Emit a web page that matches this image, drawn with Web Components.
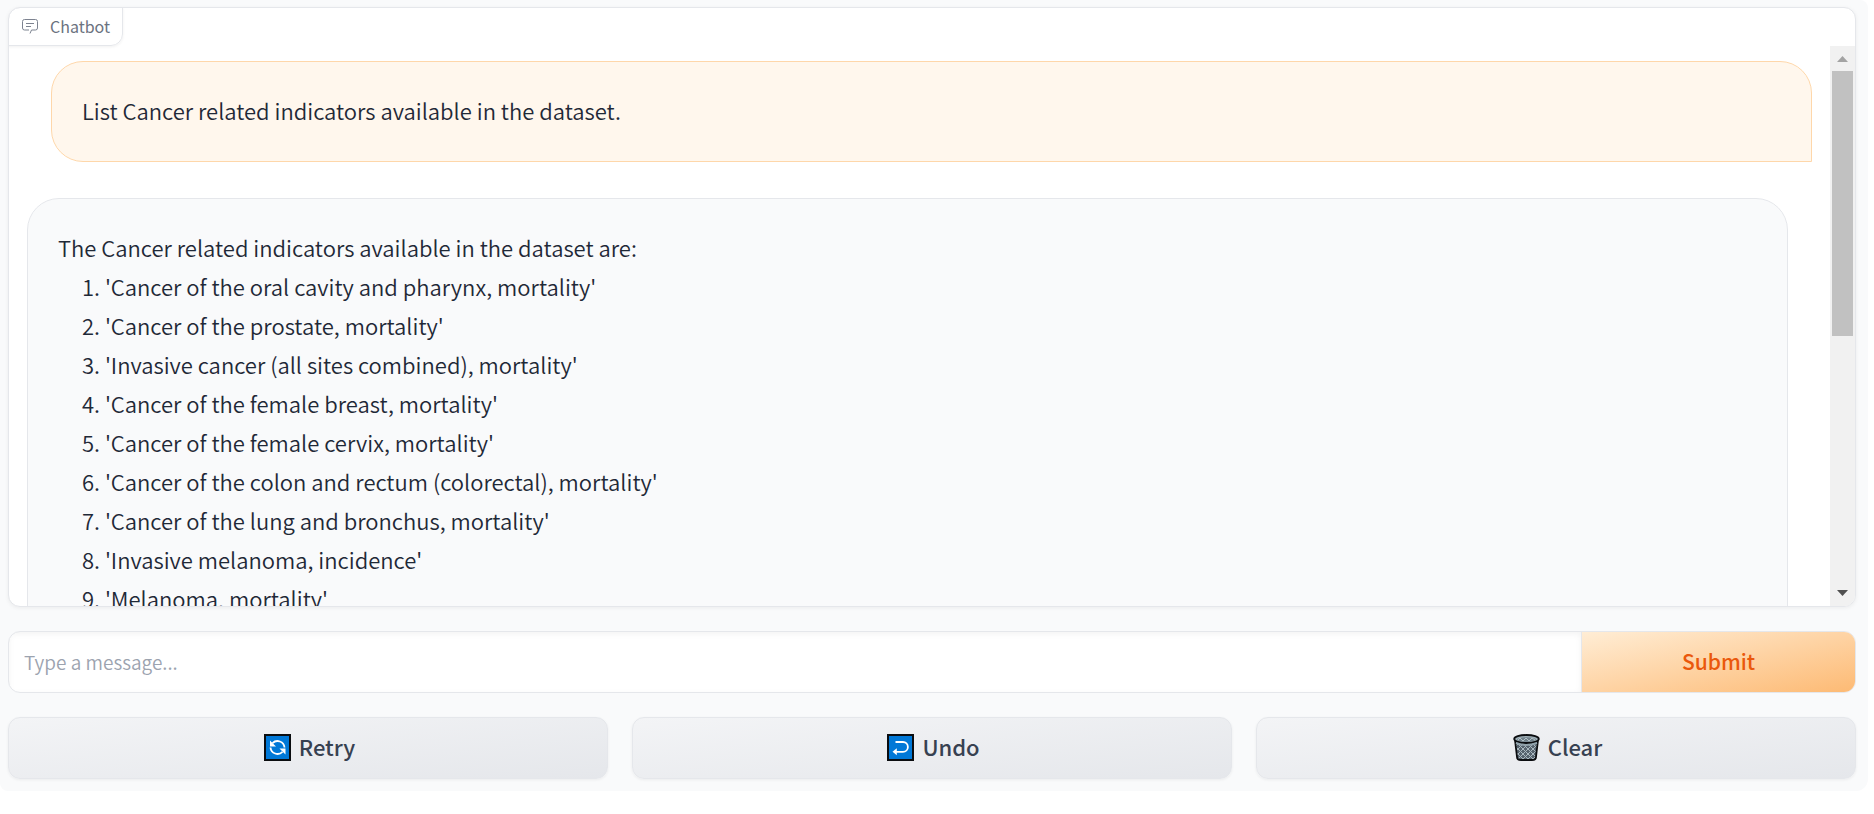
<!DOCTYPE html>
<html lang="en">
<head>
<meta charset="utf-8">
<title>Chatbot</title>
<style>
body { margin: 0; background: #fff; font-family: "Noto Sans CJK SC", "Noto Sans", sans-serif; color: #1f2937; }
</style>
</head>
<body>
<chat-layout>
  <chat-panel label="Chatbot">
    <chat-bubble from="user">List Cancer related indicators available in the dataset.</chat-bubble>
    <chat-bubble from="bot">The Cancer related indicators available in the dataset are:
      <ol>
        <li>'Cancer of the oral cavity and pharynx, mortality'</li>
        <li>'Cancer of the prostate, mortality'</li>
        <li>'Invasive cancer (all sites combined), mortality'</li>
        <li>'Cancer of the female breast, mortality'</li>
        <li>'Cancer of the female cervix, mortality'</li>
        <li>'Cancer of the colon and rectum (colorectal), mortality'</li>
        <li>'Cancer of the lung and bronchus, mortality'</li>
        <li>'Invasive melanoma, incidence'</li>
        <li>'Melanoma, mortality'</li>
      </ol>
    </chat-bubble>
  </chat-panel>
  <message-form></message-form>
  <action-row>
    <action-button>
      <svg slot="icon" width="27" height="27" viewBox="0 0 27 27" aria-hidden="true"><path d="M0 0h27v27H0z" fill="#0b0d10"/><path d="M2 2h23v23H2z" fill="#0078d7"/><g fill="none" stroke="#fff" stroke-width="1.8"><path d="M8.500 9.200A7 7 0 0 1 20.500 13.500M18.500 17.800A7 7 0 0 1 6.500 13.500"/></g><path d="M6 6.500v6h6zM21.500 20.500v-6h-6z" fill="#fff"/></svg>
      Retry
    </action-button>
    <action-button>
      <svg slot="icon" width="27" height="27" viewBox="0 0 27 27" aria-hidden="true"><path d="M0 0h27v27H0z" fill="#0b0d10"/><path d="M2 2h23v23H2z" fill="#0078d7"/><path d="M8.500 8h7.500a4.900 4.900 0 0 1 0 9.800H7" fill="none" stroke="#fff" stroke-width="1.800"/><path d="M9.800 14.200v7L5.500 17.700z" fill="#fff"/></svg>
      Undo
    </action-button>
    <action-button>
      <svg slot="icon" width="27" height="27" viewBox="0 0 27 27" aria-hidden="true"><defs><pattern id="mesh" width="5" height="5" patternUnits="userSpaceOnUse"><path d="M0 0l5 5M5 0L0 5" stroke="#a9b8bf" stroke-width="1"/></pattern></defs><path d="M2 6l2 17q0 3 4 3h11q4 0 4-3L25 6z" fill="#56636e"/><path d="M2 6l2 17q0 3 4 3h11q4 0 4-3L25 6z" fill="url(#mesh)" stroke="#0b0d10" stroke-width="1.800"/><ellipse cx="13.500" cy="5" rx="12.300" ry="4" fill="#9fb0b8" stroke="#0b0d10" stroke-width="1.800"/><ellipse cx="13.500" cy="5.500" rx="9.500" ry="2.200" fill="#71818b"/><path d="M5 6l2-2 3 3 3-3 3 3 3-3 3 2" fill="none" stroke="#b3c2c8"/><path d="M3 9q10 4 21 0" fill="none" stroke="#90a2ab" stroke-width="2"/></svg>
      Clear
    </action-button>
  </action-row>
</chat-layout>
<script>
function define(name, html, setup) {
  const template = document.createElement('template');
  template.innerHTML = html;
  customElements.define(name, class extends HTMLElement {
    constructor() {
      super();
      this.attachShadow({ mode: 'open' }).append(template.content.cloneNode(true));
    }
    connectedCallback() { if (setup) setup(this); }
  });
}

define('chat-layout', `
  <style>
    :host { display: flex; flex-direction: column; gap: 24px; margin-right: 6px; padding: 7px 12px 12px 8px; background: #f9fafb; border-radius: 0 8px 12px 8px; }
  </style>
  <slot></slot>`);

define('scroll-rail', `
  <style>
    :host { display: flex; flex-direction: column; align-items: center; width: 25px; flex: none; background: #f1f1f1; }
    svg { display: block; flex: none; }
    .track { flex: 1; display: flex; align-self: stretch; padding: 0 2px; }
    .thumb { flex: 1; height: 52%; background: #c1c1c1; }
  </style>
  <svg width="25" height="25" aria-hidden="true"><path d="M7 16L12.500 10 18 16z" fill="#a3a3a3"/></svg>
  <div class="track"><div class="thumb"></div></div>
  <svg width="25" height="25" aria-hidden="true"><path d="M7 9h11l-5.500 6z" fill="#505050"/></svg>`);

define('chat-panel', `
  <style>
    :host { display: flex; flex-direction: column; height: 600px; box-sizing: border-box; border: 1px solid #e5e7eb; border-radius: 12px; background: #fff; overflow: hidden; box-shadow: 0 1px 4px rgba(0,0,0,.06); }
    .label { display: flex; align-items: center; align-self: flex-start; gap: 12px; box-sizing: border-box; height: 39px; margin: -1px 0 0 -1px; padding: 0 12px 2px 13px; border: 1px solid #e5e7eb; border-radius: 12px 0 12px 0; color: #6b7280; font-size: 16px; line-height: 24px; box-shadow: 0 1px 3px rgba(0,0,0,.06); }
    .body { flex: 1; min-height: 0; display: flex; }
    .log { flex: 1; min-width: 0; overflow: hidden; display: flex; flex-direction: column; gap: 36px; padding: 15px 18px; box-sizing: border-box; }
  </style>
  <div class="label">
    <svg width="16" height="16" viewBox="0 0 16 16" fill="none" stroke="#7d8390" aria-hidden="true"><path d="M8 15.500l1.500-3.500H13.500a2 2 0 0 0 2-2V3.500a2 2 0 0 0-2-2H2.500a2 2 0 0 0-2 2V10a2 2 0 0 0 2 2H7M4 5.500h8M4 8.500h5"/></svg>
    <span></span>
  </div>
  <div class="body"><div class="log"><slot></slot></div><scroll-rail></scroll-rail></div>`,
  el => { el.shadowRoot.querySelector('span').textContent = el.getAttribute('label'); });

define('chat-bubble', `
  <style>
    :host { display: block; flex: none; padding: 29px 30px 31px; border: 1px solid #e5e7eb; border-radius: 32px 32px 32px 0; background: #f9fafb; font-size: 22px; font-weight: 350; line-height: 39px; margin-right: 24px; }
    :host([from="user"]) { margin: 0 0 0 24px; border-color: #fed7aa; border-radius: 32px 32px 0 32px; background: #fff7ed; }
    ::slotted(ol) { margin: 0; padding: 0 0 0 24px; list-style: decimal inside; }
  </style>
  <slot></slot>`);

define('message-form', `
  <style>
    :host { display: block; }
    form { display: flex; height: 62px; box-sizing: border-box; border: 1px solid #e5e7eb; border-radius: 12px; overflow: hidden; background: #fff; }
    input { flex: 1; min-width: 0; border: 0; outline: 0; padding: 0 15px 2px; background: transparent; font: inherit; font-size: 19px; font-weight: 350; color: #1f2937; box-shadow: inset 0 2px 6px rgba(0,0,0,.05); }
    input::placeholder { color: #9ca3af; opacity: 1; }
    button { width: 274px; border: 0; border-left: 1px solid #e5e7eb; padding: 0 0 2px; background: linear-gradient(to bottom right, #ffedd5, #fdba74); color: #ea580c; font: inherit; font-size: 21px; font-weight: 500; }
  </style>
  <form><input type="text" placeholder="Type a message..." aria-label="Message"><button type="button">Submit</button></form>`);

define('action-row', `
  <style>:host { display: grid; grid-template-columns: repeat(3, 1fr); gap: 24px; }</style>
  <slot></slot>`);

define('action-button', `
  <style>
    :host { display: block; }
    button { display: flex; align-items: center; justify-content: center; gap: 8px; width: 100%; height: 62px; padding: 0 0 2px 3px; border: 1px solid #e5e7eb; border-radius: 12px; background: linear-gradient(to bottom right, #f3f4f6, #e5e7eb); color: #374151; font: inherit; font-size: 22px; font-weight: 500; line-height: 32px; box-shadow: 0 1px 3px rgba(0,0,0,.06); }
    span { padding-bottom: 2px; }
  </style>
  <button type="button"><slot name="icon"></slot><span><slot></slot></span></button>`);
</script>
</body>
</html>
